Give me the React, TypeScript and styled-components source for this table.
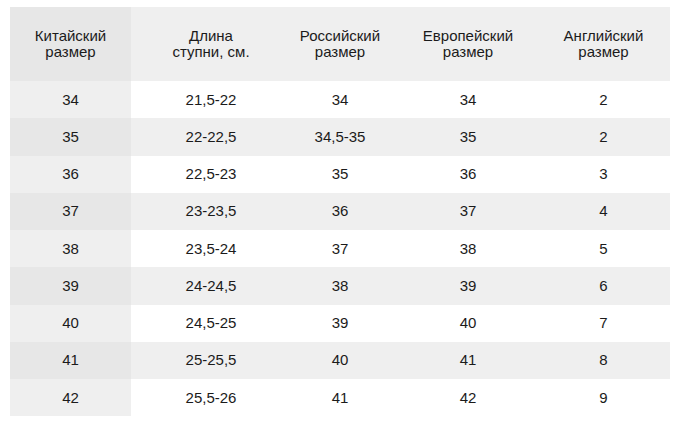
import styled, { createGlobalStyle } from "styled-components";

const GlobalStyle = createGlobalStyle`
  body {
    margin: 0;
    background: #ffffff;
    font-family: "Liberation Sans", Arial, sans-serif;
  }
`;

const Page = styled.div`
  padding: 7px 10px;
`;

const Table = styled.div`
  display: grid;
  grid-template-columns: 121px 160px 98px 158px 123px;
  grid-template-rows: 74px repeat(9, 37.25px);
  width: 660px;
  color: #1b1b1b;
  font-size: 15px;
`;

const Cell = styled.div<{ $shade: 0 | 1 | 2; $head?: boolean; $last?: boolean }>`
  display: flex;
  align-items: center;
  justify-content: center;
  text-align: center;
  line-height: 16px;
  padding-right: ${(p) => (p.$last ? "10px" : "0")};
  background: ${(p) => (p.$shade === 2 ? "#e7e7e7" : p.$shade === 1 ? "#efefef" : "#ffffff")};
`;

const headers = [
  ["Китайский", "размер"],
  ["Длина", "ступни, см."],
  ["Российский", "размер"],
  ["Европейский", "размер"],
  ["Английский", "размер"],
];

const rows = [
  ["34", "21,5-22", "34", "34", "2"],
  ["35", "22-22,5", "34,5-35", "35", "2"],
  ["36", "22,5-23", "35", "36", "3"],
  ["37", "23-23,5", "36", "37", "4"],
  ["38", "23,5-24", "37", "38", "5"],
  ["39", "24-24,5", "38", "39", "6"],
  ["40", "24,5-25", "39", "40", "7"],
  ["41", "25-25,5", "40", "41", "8"],
  ["42", "25,5-26", "41", "42", "9"],
];

export default function App() {
  return (
    <>
      <GlobalStyle />
      <Page>
        <Table>
          {headers.map((h, i) => (
            <Cell key={"h" + i} $shade={i === 0 ? 2 : 1} $head $last={i === 4}>
              {h[0]}
              <br />
              {h[1]}
            </Cell>
          ))}
          {rows.map((r, ri) =>
            r.map((v, ci) => {
              const gray = ri % 2 === 1;
              const shade = ci === 0 ? (gray ? 2 : 1) : gray ? 1 : 0;
              return (
                <Cell key={ri + "-" + ci} $shade={shade} $last={ci === 4}>
                  {v}
                </Cell>
              );
            })
          )}
        </Table>
      </Page>
    </>
  );
}
